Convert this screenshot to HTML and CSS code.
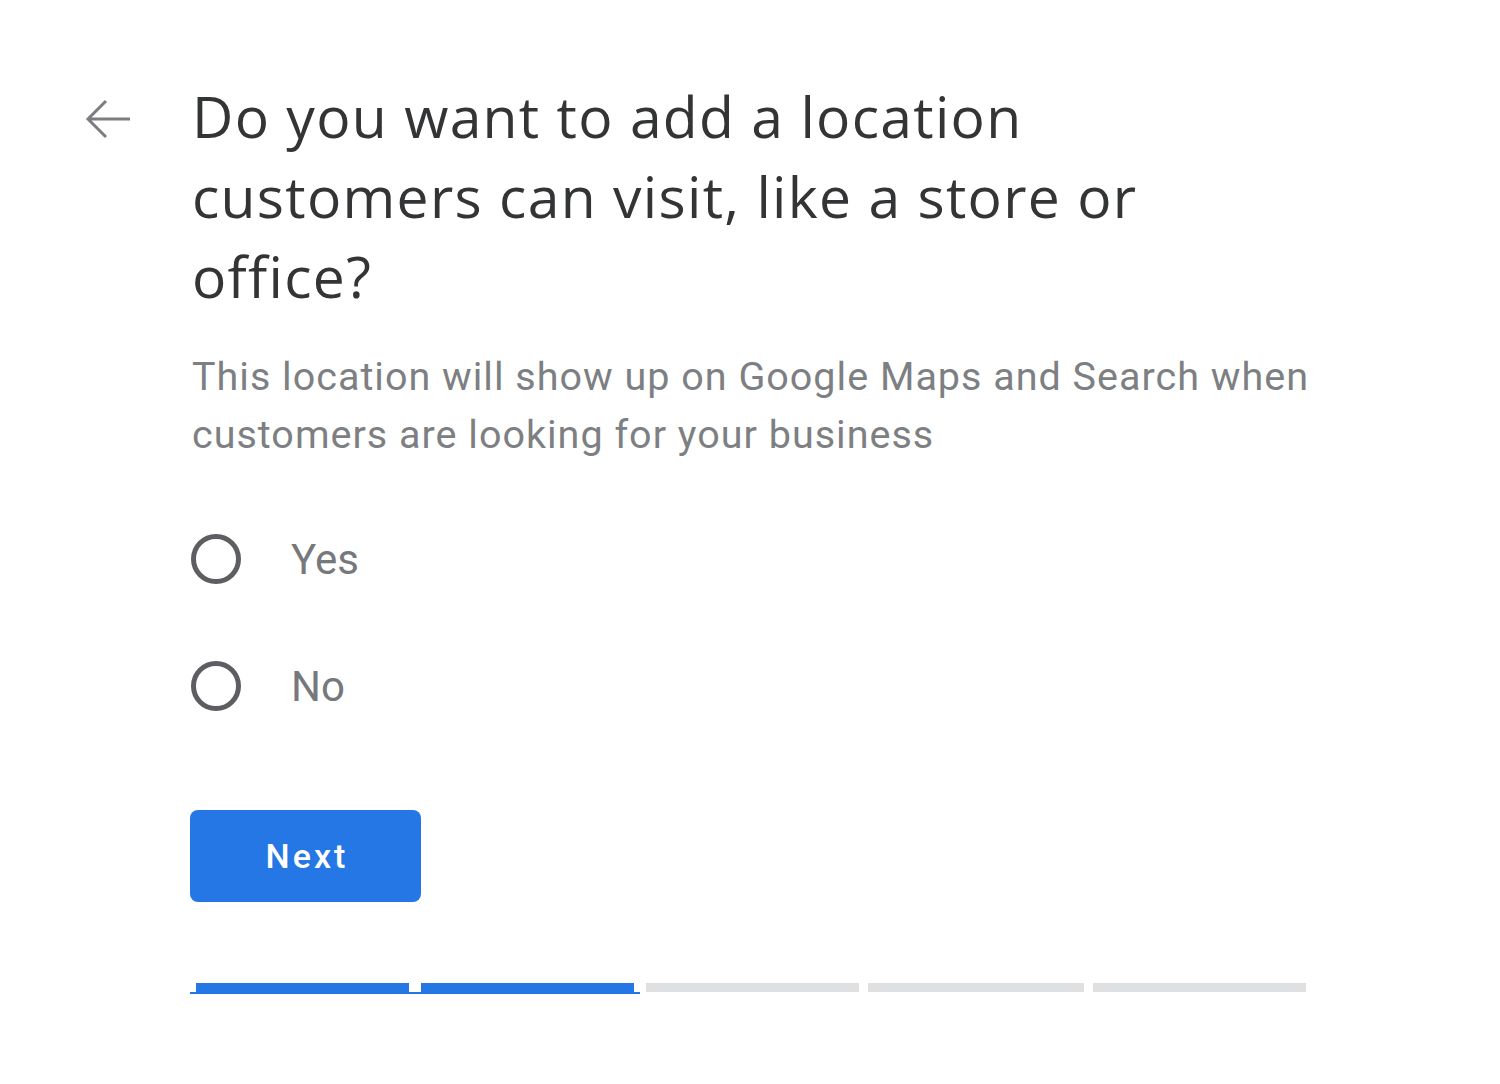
FILE: index.html
```html
<!DOCTYPE html>
<html>
<head>
<meta charset="utf-8">
<link rel="stylesheet" href="styles.css">
</head>
<body>
<div class="page">
  <div class="back">
    <svg width="48" height="44" viewBox="0 0 48 44"><path d="M46 22H4M22 4L4 22l18 18" fill="none" stroke="#7b7d80" stroke-width="3"/></svg>
  </div>
  <div class="content">
    <h1 class="title">Do you want to add a location customers can visit, like a store or office?</h1>
    <p class="subtitle">This location will show up on Google Maps and Search when customers are looking for your business</p>
    <div class="options">
      <label class="option"><span class="radio"></span><span class="option-label">Yes</span></label>
      <label class="option"><span class="radio"></span><span class="option-label">No</span></label>
    </div>
    <button class="next">Next</button>
    <div class="progress">
      <div class="progress-done">
        <span class="seg seg-done"></span>
        <span class="seg seg-done"></span>
      </div>
      <span class="seg seg-todo"></span>
      <span class="seg seg-todo w216"></span>
      <span class="seg seg-todo"></span>
    </div>
  </div>
</div>
</body>
</html>
```
FILE: styles.css
```css
html, body { margin: 0; padding: 0; background: #fff; }
body { font-family: Roboto, "Open Sans", Arial, sans-serif; }
.page {
  display: flex;
  padding: 76px 0 0 84px;
}
.back { width: 108px; padding-top: 21px; }
.back svg { display: block; }
.content { width: 1130px; }
.title {
  margin: 0;
  font-family: "Open Sans", Roboto, sans-serif;
  font-weight: 400;
  font-size: 57px;
  line-height: 80px;
  color: #333436;
  max-width: 960px;
  letter-spacing: 1.3px;
}
.subtitle {
  margin: 32px 0 0;
  font-size: 39.5px;
  line-height: 58px;
  letter-spacing: 1px;
  color: #7d7f82;
  max-width: 1125px;
}
.options { margin-top: 70px; display: flex; flex-direction: column; gap: 77px; }
.option { display: flex; align-items: center; height: 50px; }
.radio {
  box-sizing: border-box;
  width: 50px; height: 50px;
  border: 5px solid #5c5e61;
  border-radius: 50%;
  margin-left: -1px;
}
.option-label {
  margin-left: 50px;
  font-size: 42px;
  color: #76787b;
}
.next {
  display: block;
  margin: 99px 0 0 -2px;
  width: 231px; height: 92px;
  border: none; border-radius: 8px;
  background: #2477e4;
  color: #fff;
  font-family: Roboto, sans-serif;
  font-weight: 500;
  font-size: 34px;
  letter-spacing: 3px;
  padding: 0 0 0 3px;
}
.progress { display: flex; align-items: flex-start; margin: 81px 0 0 -2px; }
.progress-done {
  display: flex; gap: 12px;
  padding: 0 6px;
  border-bottom: 2px solid #2477e4;
}
.seg { display: block; width: 213px; height: 9px; }
.seg-done { background: #2477e4; }
.seg-todo { background: #dfe0e2; margin-left: 9px; }
.progress-done + .seg-todo { margin-left: 6px; }
.w216 { width: 216px; }
```
